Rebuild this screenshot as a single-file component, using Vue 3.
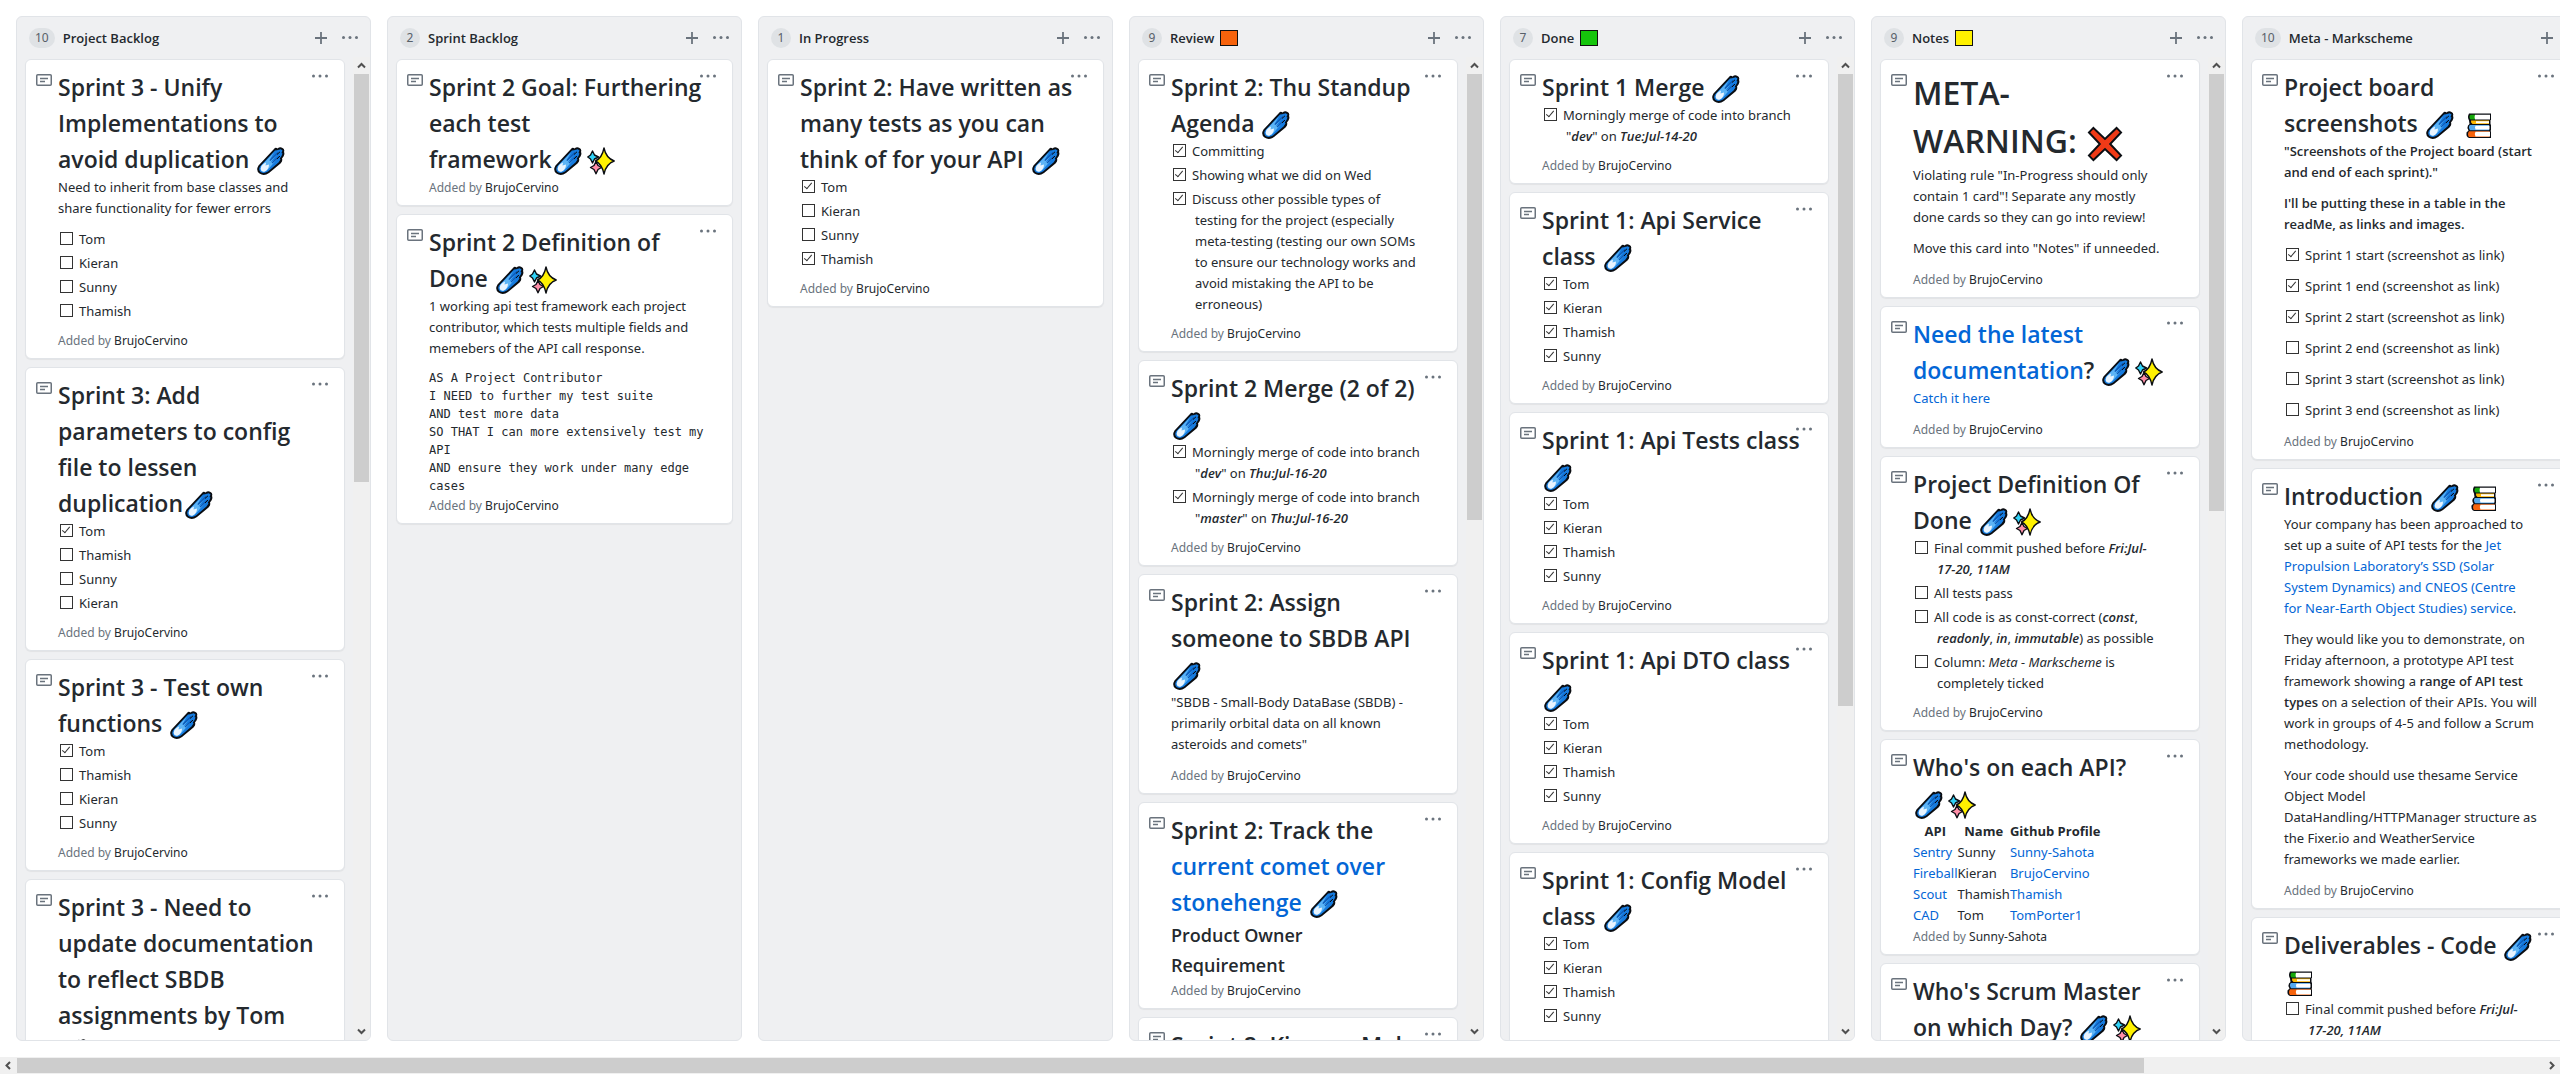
<script setup>
import { h } from 'vue'

const TOKEN = /(:\w+:|\*\*[^*]+\*\*|__[^_]+__|~[^~]+~|\[[^\]]+\]|\n)/

const lines = (text) => text.split('\n').flatMap((s, i) => (i ? [h('br'), s] : [s]))

// Inline note markup: :icon:, **bold**, __bold italic__, ~italic~, [link], newline
function RichText(props) {
  return props.text.split(TOKEN).filter(Boolean).map((t) => {
    if (t === '\n') return h('br')
    if (/^:\w+:$/.test(t)) {
      const name = t.slice(1, -1)
      return h('svg', { class: 'emoji', viewBox: '0 0 28 28', role: 'img', 'aria-label': name }, [
        h('use', { href: '#' + name })
      ])
    }
    if (t.startsWith('**')) return h('strong', lines(t.slice(2, -2)))
    if (t.startsWith('__')) return h('strong', [h('em', lines(t.slice(2, -2)))])
    if (/^~.+~$/.test(t)) return h('em', t.slice(1, -1))
    if (t[0] === '[') return h('a', { href: '#' }, lines(t.slice(1, -1)))
    return t
  })
}
RichText.props = ['text']

const list = (...items) => ({
  type: 'list',
  items: items.map((i) => ({ done: i[0] === '+', text: i.slice(1) }))
})
const p = (text) => ({ type: 'p', text })

const columns = [
  {
    name: 'Project Backlog', count: 10, thumb: 43,
    cards: [
      {
        title: 'Sprint 3 - Unify\nImplementations to\navoid duplication :comet:',
        body: [p('Need to inherit from base classes and\nshare functionality for fewer errors'), list('-Tom', '-Kieran', '-Sunny', '-Thamish')]
      },
      { title: 'Sprint 3: Add\nparameters to config\nfile to lessen\nduplication:comet:', body: [list('+Tom', '-Thamish', '-Sunny', '-Kieran')] },
      { title: 'Sprint 3 - Test own\nfunctions :comet:', body: [list('+Tom', '-Thamish', '-Kieran', '-Sunny')] },
      { title: 'Sprint 3 - Need to\nupdate documentation\nto reflect SBDB\nassignments by Tom\n:comet:', body: [] }
    ]
  },
  {
    name: 'Sprint Backlog', count: 2,
    cards: [
      { title: 'Sprint 2 Goal: Furthering\neach test\nframework:comet::sparkles:', body: [] },
      {
        title: 'Sprint 2 Definition of\nDone :comet::sparkles:',
        body: [
          p('1 working api test framework each project\ncontributor, which tests multiple fields and\nmemebers of the API call response.'),
          { type: 'pre', text: 'AS A Project Contributor\nI NEED to further my test suite\nAND test more data\nSO THAT I can more extensively test my\nAPI\nAND ensure they work under many edge\ncases' }
        ]
      }
    ]
  },
  {
    name: 'In Progress', count: 1,
    cards: [
      { title: 'Sprint 2: Have written as\nmany tests as you can\nthink of for your API :comet:', body: [list('+Tom', '-Kieran', '-Sunny', '+Thamish')] }
    ]
  },
  {
    name: 'Review', count: 9, swatch: 'orange', thumb: 47,
    cards: [
      {
        title: 'Sprint 2: Thu Standup\nAgenda :comet:',
        body: [list('+Committing', '+Showing what we did on Wed', '+Discuss other possible types of\ntesting for the project (especially\nmeta-testing (testing our own SOMs\nto ensure our technology works and\navoid mistaking the API to be\nerroneous)')]
      },
      {
        title: 'Sprint 2 Merge (2 of 2)\n:comet:',
        body: [list('+Morningly merge of code into branch\n"__dev__" on __Thu:Jul-16-20__', '+Morningly merge of code into branch\n"__master__" on __Thu:Jul-16-20__')]
      },
      { title: 'Sprint 2: Assign\nsomeone to SBDB API\n:comet:', body: [p('"SBDB - Small-Body DataBase (SBDB) -\nprimarily orbital data on all known\nasteroids and comets"')] },
      { title: 'Sprint 2: Track the\n[current comet over\nstonehenge] :comet:', body: [{ type: 'h3', text: 'Product Owner\nRequirement' }] },
      { title: 'Sprint 2: Kieran - Make', body: [] }
    ]
  },
  {
    name: 'Done', count: 7, swatch: 'green', thumb: 66.600,
    cards: [
      { title: 'Sprint 1 Merge :comet:', body: [list('+Morningly merge of code into branch\n"__dev__" on __Tue:Jul-14-20__')] },
      { title: 'Sprint 1: Api Service\nclass :comet:', body: [list('+Tom', '+Kieran', '+Thamish', '+Sunny')] },
      { title: 'Sprint 1: Api Tests class\n:comet:', body: [list('+Tom', '+Kieran', '+Thamish', '+Sunny')] },
      { title: 'Sprint 1: Api DTO class\n:comet:', body: [list('+Tom', '+Kieran', '+Thamish', '+Sunny')] },
      { title: 'Sprint 1: Config Model\nclass :comet:', body: [list('+Tom', '+Kieran', '+Thamish', '+Sunny')] }
    ]
  },
  {
    name: 'Notes', count: 9, swatch: 'yellow', thumb: 46,
    cards: [
      {
        title: 'META-\nWARNING: :cross:', large: true,
        body: [p('Violating rule "In-Progress should only\ncontain 1 card"! Separate any mostly\ndone cards so they can go into review!'), p('Move this card into "Notes" if unneeded.')]
      },
      { title: '[Need the latest\ndocumentation]? :comet::sparkles:', body: [p('[Catch it here]')] },
      {
        title: 'Project Definition Of\nDone :comet::sparkles:',
        body: [list('-Final commit pushed before __Fri:Jul-\n17-20, 11AM__', '-All tests pass', '-All code is as const-correct (__const__,\n__readonly__, __in__, __immutable__) as possible', '-Column: ~Meta - Markscheme~ is\ncompletely ticked')]
      },
      {
        title: "Who's on each API?\n:comet::sparkles:", author: 'Sunny-Sahota',
        body: [{
          type: 'table',
          head: ['API', 'Name', 'Github Profile'],
          rows: [['[Sentry]', 'Sunny', '[Sunny-Sahota]'], ['[Fireball]', 'Kieran', '[BrujoCervino]'], ['[Scout]', 'Thamish', '[Thamish]'], ['[CAD]', 'Tom', '[TomPorter1]']]
        }]
      },
      { title: "Who's Scrum Master\non which Day? :comet::sparkles:", body: [] }
    ]
  },
  {
    name: 'Meta - Markscheme', count: 10, thumb: 40,
    cards: [
      {
        title: 'Project board\nscreenshots :comet: :books:',
        body: [
          p('**"Screenshots of the Project board (start\nand end of each sprint)."**'),
          p("**I'll be putting these in a table in the\nreadMe, as links and images.**"),
          { ...list('+Sprint 1 start (screenshot as link)', '+Sprint 1 end (screenshot as link)', '+Sprint 2 start (screenshot as link)', '-Sprint 2 end (screenshot as link)', '-Sprint 3 start (screenshot as link)', '-Sprint 3 end (screenshot as link)'), loose: true }
        ]
      },
      {
        title: 'Introduction :comet: :books:',
        body: [
          p('Your company has been approached to\nset up a suite of API tests for the [Jet\nPropulsion Laboratory’s SSD (Solar\nSystem Dynamics) and CNEOS (Centre\nfor Near-Earth Object Studies) service].'),
          p('They would like you to demonstrate, on\nFriday afternoon, a prototype API test\nframework showing a **range of API test\ntypes** on a selection of their APIs. You will\nwork in groups of 4-5 and follow a Scrum\nmethodology.'),
          p('Your code should use thesame Service\nObject Model\nDataHandling/HTTPManager structure as\nthe Fixer.io and WeatherService\nframeworks we made earlier.')
        ]
      },
      { title: 'Deliverables - Code :comet:\n:books:', body: [list('-Final commit pushed before __Fri:Jul-\n17-20, 11AM__')] }
    ]
  }
]
</script>

<template>
  <div class="page">
    <svg class="defs" aria-hidden="true">
      <symbol id="comet" viewBox="0 0 28 28">
        <path d="M1.500 18.500 17 2Q18.500 0 20.500 1.500 23 -.5 25.500 1 28 2 27 5 28 7 26.500 9.500L25 11.500Q26 14 23.500 16.500L12 26Q7 29.500 2.500 26.500-1.500 23.500 1.500 18.500Z" fill="#0a0d12" />
        <path d="M3 19.500 18 3.500 20 3.200 23.800 2.200 25.500 3.500 24.500 6 25.500 6.500 24.500 9 22.800 11.500 23.500 12.500 21.500 15.500 11 24.500Q7 27 3.500 25 1.200 22.500 3 19.500Z" fill="#157bdf" />
        <path d="M4 19 17 5.500 12 14 20 7 13.500 15.500 21 11 11 22.500Q7 26 4 24Z" fill="#5db4f5" />
        <path d="M13 13.500 21 5.500M15 16 22 9.500" stroke="#0c57b4" stroke-width="1.200" />
        <path d="M20 7.500 23 4.800M20 12 23 9" stroke="#0a0d12" stroke-width="1" />
        <path d="M3.500 22Q4 17.500 9 15.500L8.500 18.500 12 17.500Q12 22 8 24.500 4.500 25.500 3.500 22Z" fill="#e8f4ff" />
      </symbol>
      <symbol id="sparkles" viewBox="0 0 28 28">
        <g stroke="#0a0d12" stroke-width="1.400" stroke-linejoin="round">
          <path d="M9 14.500 11 18.500 14.500 20.500 11 22.500 9 26.800 7 22.500 3.500 20.500 7 18.500Z" fill="#ff8fa8" />
          <path d="M17 1Q19 11 27.200 14 19 17 17 27 15 17 8.500 14 15 11 17 1Z" fill="#fff100" />
          <path d="M5.500 4 7.500 8 11.500 10 7.500 12 5.500 16 3.500 12 .8 10 3.500 8Z" fill="#31d2f7" />
        </g>
      </symbol>
      <symbol id="cross" viewBox="0 0 28 28">
        <path d="M5 1.500 14 10 23 1.500 26.500 5 18 14 26.500 23 23 26.500 14 18 5 26.500 1.500 23 10 14 1.500 5Z" fill="#f03a17" stroke="#0a0d12" stroke-width="1.500" />
      </symbol>
      <symbol id="books" viewBox="0 0 28 28">
        <path d="M4 2.500H26V9H25.500V13L26 14V19.500H25.500L26 21V27H4Q1 26 1.500 21.500L3.500 19.500Q1.500 17 3 14.500L4.500 13 4 9.500Q2 6 4 2.500Z" fill="#0a0d12" />
        <path d="M5.500 3.800H10V8.500H5.500Q3.500 6 5.500 3.800Z" fill="#16a80c" />
        <path d="M6 9.500H24V13H7.500Q5.500 11.500 6 9.500Z" fill="#ffb900" />
        <path d="M4.800 14H24V19.200H5Q3 16.500 4.800 14Z" fill="#55a9ee" />
        <path d="M4 20.200H24.500V26H4Q2 23.500 4 20.200Z" fill="#f7630c" />
        <path d="M10 3.800H25V8.500H10Q9 6.500 10 3.800ZM11 10.200H24V12.200H11ZM10.500 14.800H24.500V18.400H10.500Q9.500 16.500 10.500 14.800ZM10.500 20.800H25V25.500H10.500Q9 23 10.500 20.800Z" fill="#fff" />
      </symbol>
    </svg>

    <main class="board">
      <section v-for="col in columns" :key="col.name" class="column">
        <header class="column-head">
          <span class="counter">{{ col.count }}</span>
          <h2 class="column-name">{{ col.name }}</h2>
          <span v-if="col.swatch" class="swatch" :class="col.swatch"></span>
          <span class="spacer"></span>
          <button class="icon-btn" type="button" aria-label="Add a note">
            <svg viewBox="0 0 16 16"><path d="M8 2v12M2 8h12" stroke="currentColor" stroke-width="1.800" /></svg>
          </button>
          <button class="icon-btn" type="button" aria-label="Column menu">
            <svg viewBox="0 0 16 16" fill="currentColor"><circle cx="1.500" cy="7.500" r="1.500" /><circle cx="8" cy="7.500" r="1.500" /><circle cx="14.500" cy="7.500" r="1.500" /></svg>
          </button>
        </header>

        <div class="column-body">
          <div class="cards">
            <article v-for="(card, ci) in col.cards" :key="ci" class="card">
              <svg class="note-icon" viewBox="0 0 16 12" fill="none" stroke="currentColor">
                <rect x=".75" y=".75" width="14.500" height="10.500" rx="1" stroke-width="1.500" />
                <path d="M4 4.500h8M4 7.500h5" stroke-width="1.400" />
              </svg>
              <div class="card-content">
                <h1 v-if="card.large" class="title large"><RichText :text="card.title" /></h1>
                <h2 v-else class="title"><RichText :text="card.title" /></h2>
                <template v-for="(b, bi) in card.body" :key="bi">
                  <p v-if="b.type === 'p'" class="para"><RichText :text="b.text" /></p>
                  <h3 v-else-if="b.type === 'h3'" class="subtitle"><RichText :text="b.text" /></h3>
                  <pre v-else-if="b.type === 'pre'" class="code">{{ b.text }}</pre>
                  <ul v-else-if="b.type === 'list'" class="tasks" :class="{ loose: b.loose }">
                    <li v-for="(item, ii) in b.items" :key="ii">
                      <label><input type="checkbox" :checked="item.done" /><RichText :text="item.text" /></label>
                    </li>
                  </ul>
                  <table v-else class="api-table">
                    <thead><tr><th v-for="c in b.head" :key="c">{{ c }}</th></tr></thead>
                    <tbody>
                      <tr v-for="(r, ri) in b.rows" :key="ri"><td v-for="(c, k) in r" :key="k"><RichText :text="c" /></td></tr>
                    </tbody>
                  </table>
                </template>
                <div class="added">Added by <a href="#">{{ card.author || 'BrujoCervino' }}</a></div>
              </div>
              <button class="icon-btn card-menu" type="button" aria-label="Card menu">
                <svg viewBox="0 0 16 16" fill="currentColor"><circle cx="1.500" cy="8" r="1.500" /><circle cx="8" cy="8" r="1.500" /><circle cx="14.500" cy="8" r="1.500" /></svg>
              </button>
            </article>
          </div>
          <div v-if="col.thumb" class="vbar">
            <svg class="arrow" viewBox="0 0 17 17"><path d="M5 10.500 8.500 7 12 10.500" /></svg>
            <div class="track"><div class="thumb" :style="{ height: col.thumb + '%' }"></div></div>
            <svg class="arrow" viewBox="0 0 17 17"><path d="M5 6.500 8.500 10 12 6.500" /></svg>
          </div>
        </div>
      </section>
    </main>

    <div class="hbar">
      <svg class="arrow" viewBox="0 0 17 17"><path d="M10 5 6.500 8.500 10 12" /></svg>
      <div class="track"><div class="thumb"></div></div>
      <svg class="arrow" viewBox="0 0 17 17"><path d="M7 5 10.500 8.500 7 12" /></svg>
    </div>
  </div>
</template>

<style>
body {
  background: #fff;
  overflow: hidden;
}
</style>

<style scoped>
.page {
  height: 100vh;
  display: flex;
  flex-direction: column;
  font: 13px/21px "Noto Sans", "Open Sans", sans-serif;
  color: #24292e;
  white-space: nowrap;
}
.defs { position: absolute; width: 0; height: 0; }
.board {
  flex: 1;
  min-height: 0;
  display: flex;
  gap: 16px;
  padding: 16px;
  overflow: hidden;
}
.column {
  flex: 0 0 355px;
  box-sizing: border-box;
  display: flex;
  flex-direction: column;
  background: #eff0f2;
  border: 1px solid #e1e4e8;
  border-radius: 6px;
  overflow: hidden;
}
.column-head {
  display: flex;
  align-items: center;
  height: 40px;
  padding: 2px 12px 0;
  box-sizing: border-box;
  flex: none;
}
.counter {
  min-width: 20px;
  box-sizing: border-box;
  padding: 0 6px;
  margin-right: 8px;
  border-radius: 10px;
  background: #dfe2e5;
  color: #586069;
  font-size: 12px;
  line-height: 20px;
  text-align: center;
}
.column-name {
  margin: 0;
  font: 600 13px/21px "Open Sans", "Noto Sans", sans-serif;
}
.swatch {
  width: 18px;
  height: 16px;
  box-sizing: border-box;
  margin-left: 6px;
  border: 1px solid #111;
}
.orange { background: #f7630c; }
.green { background: #16c60c; }
.yellow { background: #fff100; }
.spacer { flex: 1; }
.icon-btn {
  width: 16px;
  height: 16px;
  margin-left: 13px;
  padding: 0;
  border: 0;
  background: none;
  color: #6a737d;
}
.icon-btn svg { display: block; width: 16px; height: 16px; }
.column-body {
  flex: 1;
  min-height: 0;
  display: flex;
}
.cards {
  flex: 1;
  min-width: 0;
  padding: 2px 8px 0;
  overflow: hidden;
}
.card {
  position: relative;
  display: flex;
  padding: 9px 10px 7px;
  margin-bottom: 8px;
  background: #fff;
  border: 1px solid #e1e4e8;
  border-radius: 6px;
  box-shadow: 0 1px 1px rgba(27, 31, 35, 0.06);
}
.note-icon {
  flex: none;
  width: 16px;
  height: 12px;
  margin: 5px 6px 0 0;
  color: #6a737d;
}
.card-content { flex: 1; min-width: 0; }
.card-menu {
  position: absolute;
  top: 8px;
  right: 16px;
}
.title {
  margin: 0;
  font: 600 23px/36px "Open Sans", "Noto Sans", sans-serif;
}
.title.large { font-size: 32px; line-height: 48px; }
.subtitle {
  margin: 0;
  font: 600 18px/30px "Open Sans", "Noto Sans", sans-serif;
}
.title :deep(.emoji) {
  width: 28px;
  height: 28px;
  margin: 0 3px 0 2px;
  vertical-align: -7px;
}
.title.large :deep(.emoji) {
  width: 36px;
  height: 36px;
  margin: 0 4px 0 2px;
  vertical-align: -9px;
}
.para { margin: 0 0 10px; }
.card :deep(strong) { font-family: "Open Sans", "Noto Sans", sans-serif; font-weight: 600; }
.card :deep(a) { color: #0366d6; text-decoration: none; }
.code {
  margin: 0;
  font: 12px/18px "DejaVu Sans Mono", "Liberation Mono", monospace;
}
.tasks {
  margin: 0 0 8px;
  padding: 0 0 0 24px;
  list-style: none;
}
.tasks li + li { margin-top: 3px; }
.tasks.loose { margin-bottom: 10px; }
.tasks.loose li + li { margin-top: 10px; }
.tasks input {
  appearance: none;
  position: relative;
  width: 13px;
  height: 13px;
  box-sizing: border-box;
  margin: 0 6px 0 -22px;
  border: 1px solid #333;
  background: #fff;
  vertical-align: -1px;
}
.tasks input:checked::after {
  content: "";
  position: absolute;
  left: 3px;
  top: 0;
  width: 3px;
  height: 7px;
  border: solid #333;
  border-width: 0 1px 1px 0;
  transform: rotate(40deg);
}
.api-table { border-collapse: collapse; }
.api-table th { padding: 0; font-family: "Open Sans", "Noto Sans", sans-serif; font-weight: 700; text-align: center; }
.api-table td { padding: 0; }
.added { color: #6a737d; font-size: 12px; }
.card .added a { color: #24292e; }
.arrow {
  flex: none;
  display: block;
  width: 17px;
  height: 17px;
  fill: none;
  stroke: #505050;
  stroke-width: 2;
}
.vbar {
  flex: none;
  display: flex;
  flex-direction: column;
  width: 17px;
  background: #f0f0f0;
}
.track { flex: 1; min-width: 0; }
.thumb { background: #cdcdcd; }
.vbar .thumb { margin: 0 1px; }
.hbar {
  flex: none;
  display: flex;
  height: 17px;
  background: #f0f0f0;
}
.hbar .thumb { width: 84.2%; height: 15px; margin: 1px 0; }
</style>
